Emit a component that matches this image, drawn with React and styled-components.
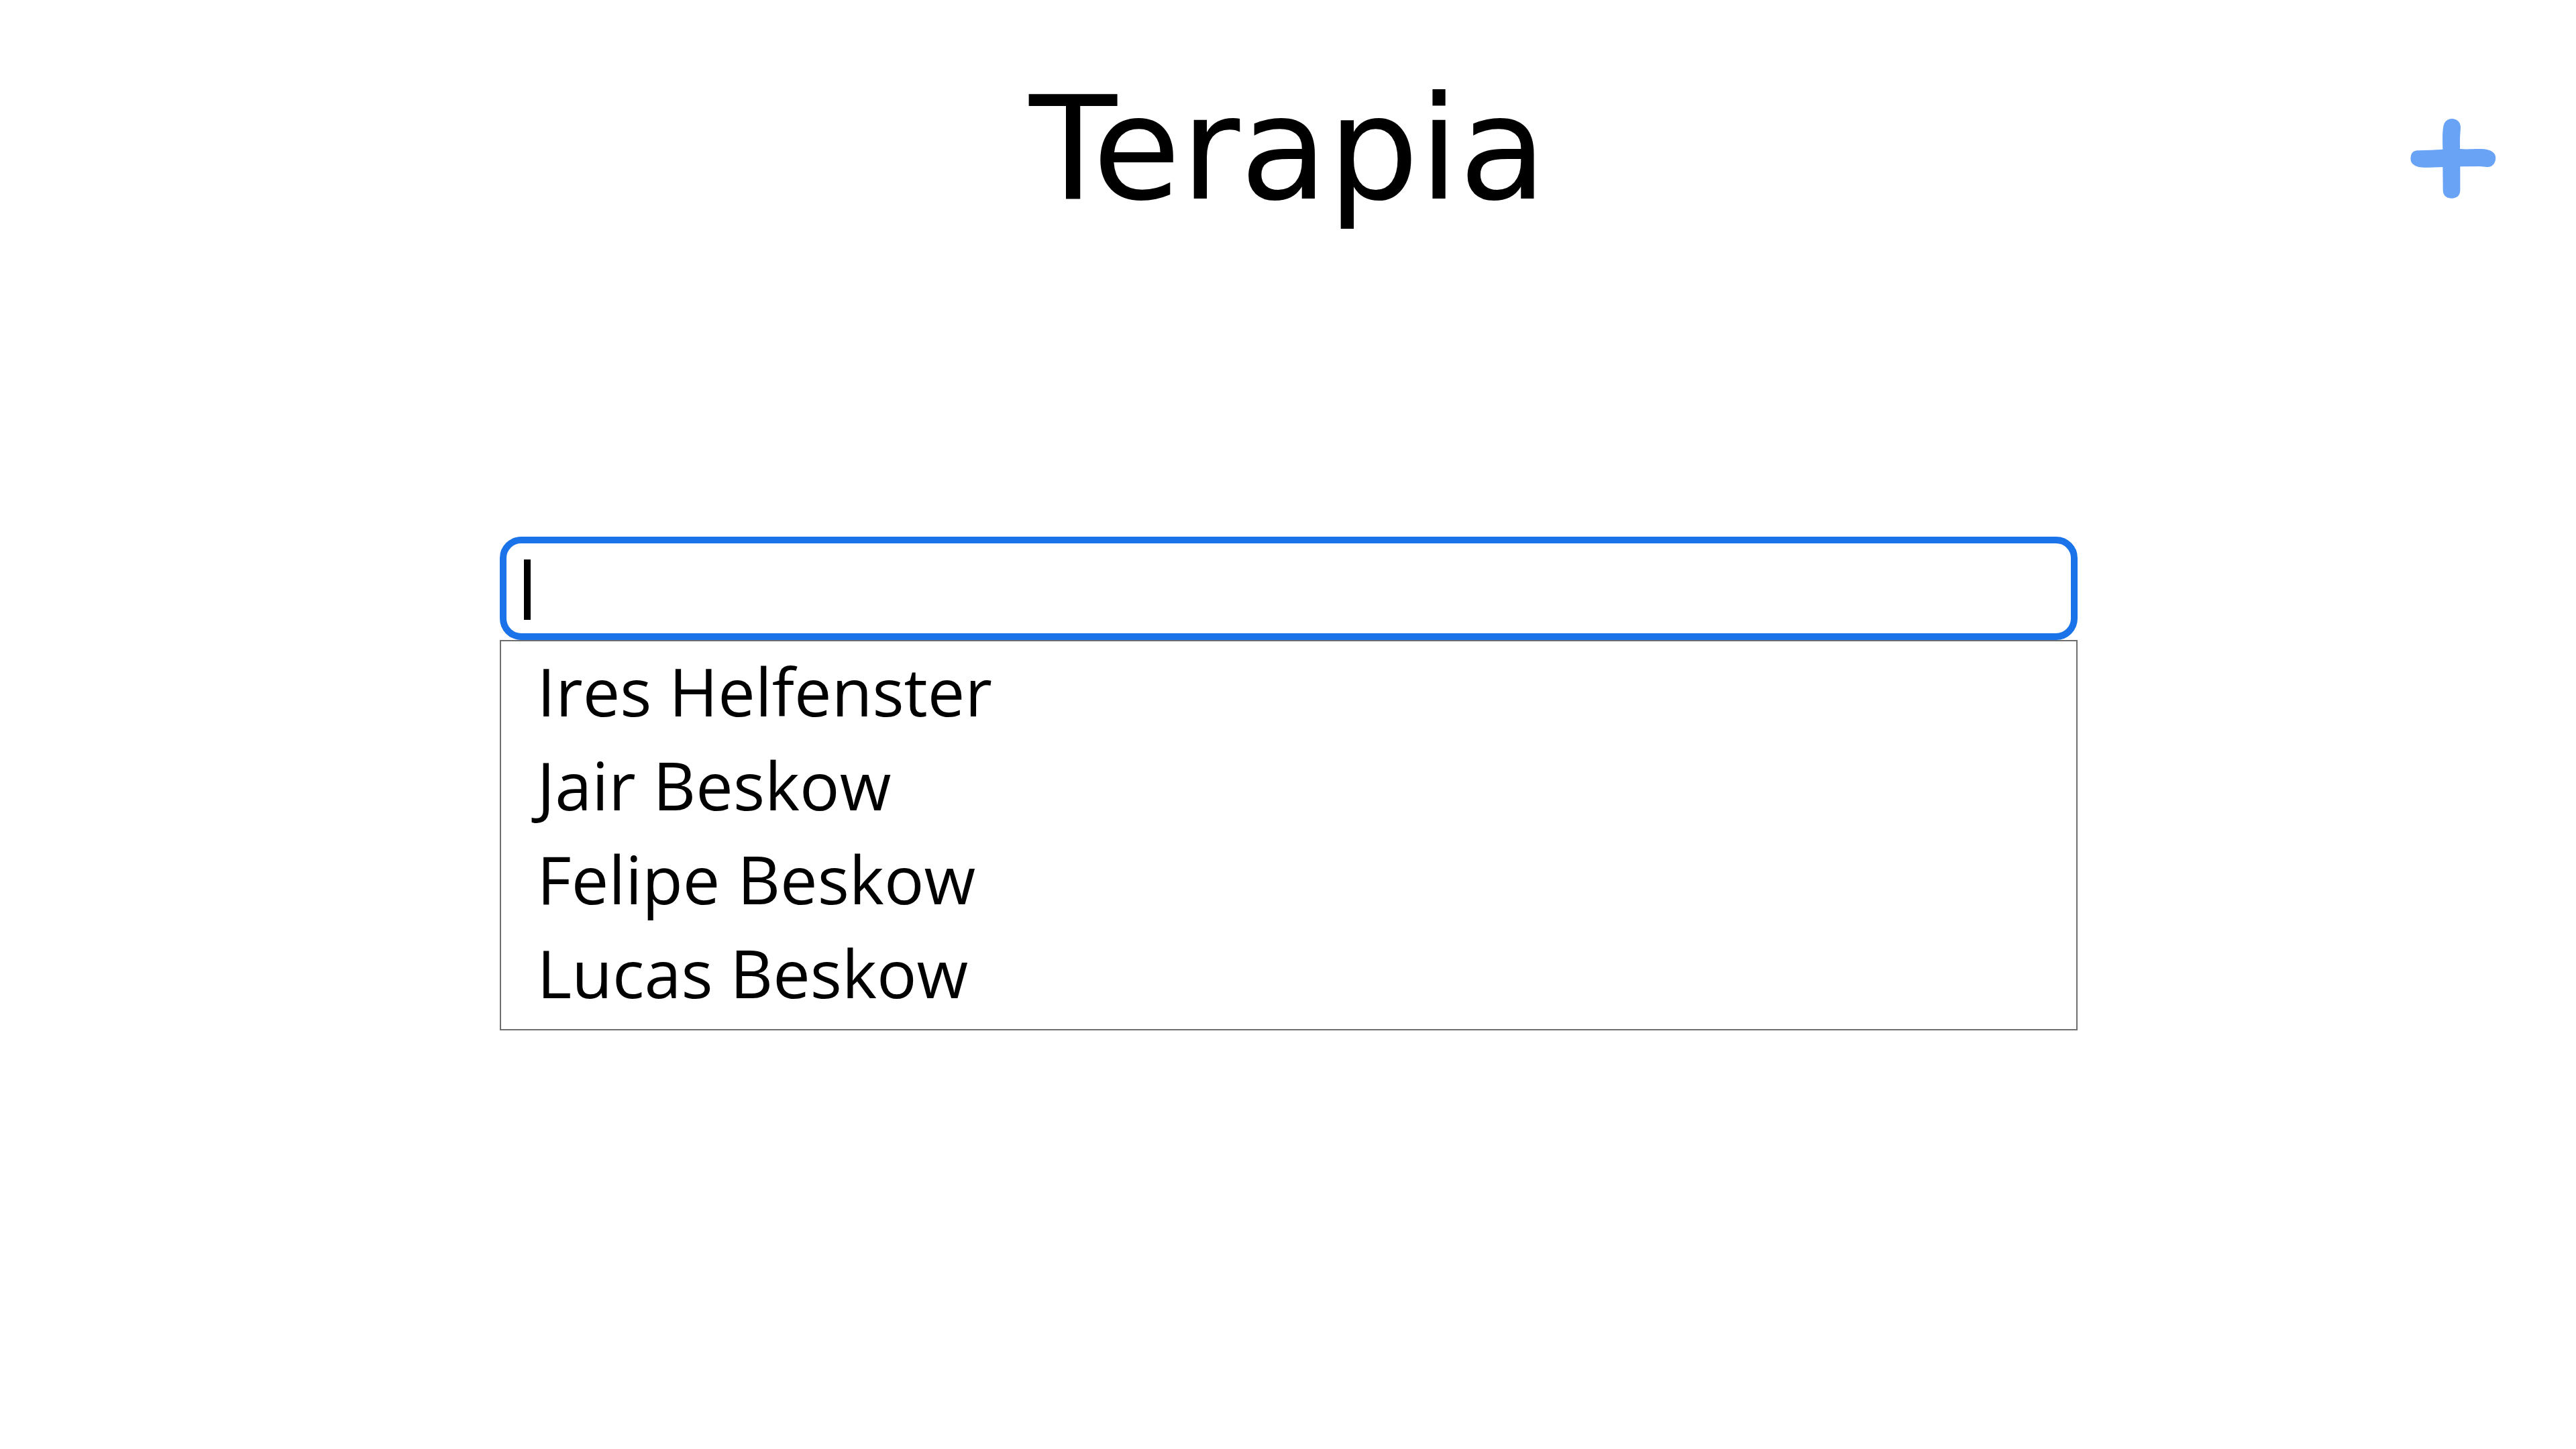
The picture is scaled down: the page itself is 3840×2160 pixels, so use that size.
import React, { useState } from "react";
import styled, { createGlobalStyle } from "styled-components";

const GlobalStyle = createGlobalStyle`
  *, *::before, *::after { box-sizing: border-box; }
  body {
    margin: 0;
    background: #ffffff;
    color: #000000;
    font-family: Verdana, "DejaVu Sans", sans-serif;
  }
`;

const Header = styled.header`
  display: grid;
  grid-template-columns: 1fr auto 1fr;
  align-items: start;
  padding: 92px 118px 0;
`;

const Title = styled.h1`
  grid-column: 2;
  margin: 0;
  font-size: 214px;
  font-weight: 400;
  line-height: 260px;
`;

const AddButton = styled.button`
  justify-self: end;
  margin: 84px 0 0;
  padding: 0;
  border: 0;
  background: none;
  color: #68a3f6;
  cursor: pointer;
`;

const PlusIcon = styled.svg`
  display: block;
  width: 130px;
  height: 122px;
  fill: currentColor;
`;

const Main = styled.main`
  display: flex;
  justify-content: center;
  padding: 448px 0 0 2px;
`;

const Combobox = styled.div`
  width: calc(60% + 50px);
`;

const Field = styled.div`
  position: relative;
`;

const SearchInput = styled.input`
  display: block;
  width: 100%;
  height: 154px;
  padding: 0 26px;
  border: 10px solid #1a73e8;
  border-radius: 32px;
  outline: none;
  background: #ffffff;
  caret-color: transparent;
  font: 400 80px "Open Sans", sans-serif;
`;

const Caret = styled.span`
  position: absolute;
  top: 34px;
  left: 36px;
  width: 10px;
  height: 90px;
  background: #000000;
  pointer-events: none;
`;

const Options = styled.ul`
  margin: 0;
  padding: 4px 0 14px;
  border: 2px solid #6e6e6e;
  list-style: none;
`;

const Option = styled.li`
  padding: 0 54px;
  font-family: "Segoe UI", "Open Sans", sans-serif;
  font-size: 99px;
  line-height: 140px;
  cursor: default;
`;

const patients = ["Ires Helfenster", "Jair Beskow", "Felipe Beskow", "Lucas Beskow"];

export default function App() {
  const [query, setQuery] = useState("");
  const matches = patients.filter((name) =>
    name.toLowerCase().includes(query.toLowerCase())
  );

  return (
    <>
      <GlobalStyle />
      <Header>
        <Title>Terapia</Title>
        <AddButton type="button" aria-label="Adicionar">
          <PlusIcon viewBox="95 78 390 366" aria-hidden="true">
            <path d="M243 218 C242 180 241 140 246 115 C250 93 265 81 284 81 C306 81 323 96 323 120 C322 145 319 165 320 190 L320 216 C350 219 375 216 405 216 C438 216 460 221 473 236 C480 244 480 254 479 264 C475 285 462 298 441 297 C430 297 423 294 408 294 L321 295 L321 400 C321 424 307 437 282 437 C257 437 244 422 244 400 L243 297 L180 299 C145 300 125 297 110 284 C98 274 98 259 101 246 C105 230 115 223 135 223 C170 222 207 220 243 218 Z" />
          </PlusIcon>
        </AddButton>
      </Header>
      <Main>
        <Combobox>
          <Field>
            <SearchInput
              type="text"
              role="combobox"
              aria-label="Paciente"
              aria-expanded="true"
              aria-controls="patient-options"
              autoComplete="off"
              value={query}
              onChange={(event) => setQuery(event.target.value)}
            />
            {query === "" && <Caret aria-hidden="true" />}
          </Field>
          <Options id="patient-options" role="listbox" aria-label="Pacientes">
            {matches.map((name) => (
              <Option key={name} role="option" aria-selected="false">
                {name}
              </Option>
            ))}
          </Options>
        </Combobox>
      </Main>
    </>
  );
}
